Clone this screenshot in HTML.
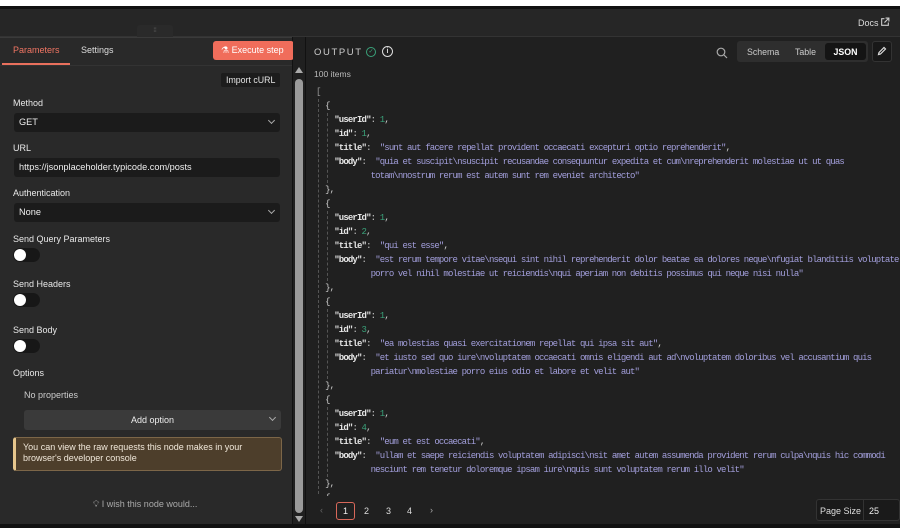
<!DOCTYPE html>
<html><head><style>
*{box-sizing:border-box;margin:0;padding:0}
body{width:900px;height:528px;background:#fff;position:relative;overflow:hidden;font-family:"Liberation Sans",sans-serif;color:#ddd;font-size:9px}
.abs{position:absolute}
#frame{left:0;top:6px;width:900px;height:522px;background:#111}
#hdr{left:0;top:9px;width:900px;height:28px;background:#262626;border-bottom:1px solid #333}
#left{left:0;top:37px;width:292px;height:487px;background:#292929;border-top:1px solid #3a3a3a}
#sb{left:293px;top:37px;width:12px;height:487px;background:#202020}
#right{left:306px;top:37px;width:594px;height:487px;background:#202020}
.lbl{position:absolute;left:13px;font-size:9px;color:#e8e8e8}
.inp{position:absolute;left:14px;width:266px;height:19px;background:#1b1b1b;border-radius:3px;font-size:9.2px;color:#eee;padding:4px 0 0 5px}
.chev{position:absolute;right:6px;top:5px;width:5px;height:5px;border-right:1px solid #aaa;border-bottom:1px solid #aaa;transform:rotate(45deg)}
.tog{position:absolute;left:13px;width:27px;height:14px;background:#171717;border-radius:7px}
.tog:after{content:"";position:absolute;left:1px;top:1px;width:12px;height:12px;border-radius:6px;background:#fff}
#json{position:absolute;left:316px;top:85px;font-family:"Liberation Mono",monospace;font-size:9px;letter-spacing:-0.85px;line-height:14px;white-space:pre;color:#ccc}
.k{color:#e6e6e6;font-weight:bold}
.n{color:#3aa27a}
.s{color:#a39fdc}
.g{position:absolute;width:0;border-left:1px dashed #555}
</style></head><body>
<div id="frame" class="abs"></div>
<div id="hdr" class="abs"><span class="abs" style="left:858px;top:9px;font-size:9px;color:#ddd">Docs</span>
<svg class="abs" style="left:880px;top:8px" width="10" height="10" viewBox="0 0 9 9" fill="none" stroke="#ccc" stroke-width="1"><path d="M4 1.5H1.5V7.5H7.5V5M5 1H8V4M8 1L4 5"/></svg></div>
<div class="abs" style="left:137px;top:25px;width:36px;height:12px;background:#2a2a2a;border-radius:3px 3px 0 0;font-size:6px;color:#666;text-align:center;line-height:12px">⁞⁞</div>
<div id="left" class="abs">
 <div class="abs" style="left:13px;top:7px;font-size:9px;color:#f07563">Parameters</div>
 <div class="abs" style="left:2px;top:25px;width:68px;height:2px;background:#e9705d"></div>
 <div class="abs" style="left:81px;top:7px;font-size:9px;color:#ddd">Settings</div>
 <div class="abs" style="left:0;top:27px;width:292px;height:1px;background:#333"></div>
 <div class="abs" style="left:213px;top:3px;width:81px;height:19px;background:#f06d5b;border-radius:3px;color:#fff;font-size:9px;padding:4px 0 0 8px">⚗ Execute step</div>
 <div class="abs" style="left:221px;top:35px;width:59px;height:14px;background:#1c1c1c;border-radius:2px;font-size:8.8px;color:#e4e4e4;padding:2px 0 0 5px">Import cURL</div>
 <div class="lbl" style="top:60px">Method</div>
 <div class="inp" style="top:75px">GET<div class="chev"></div></div>
 <div class="lbl" style="top:105px">URL</div>
 <div class="inp" style="top:120px">https://jsonplaceholder.typicode.com/posts</div>
 <div class="lbl" style="top:150px">Authentication</div>
 <div class="inp" style="top:165px">None<div class="chev"></div></div>
 <div class="lbl" style="top:196px">Send Query Parameters</div>
 <div class="tog" style="top:210px"></div>
 <div class="lbl" style="top:241px">Send Headers</div>
 <div class="tog" style="top:255px"></div>
 <div class="lbl" style="top:287px">Send Body</div>
 <div class="tog" style="top:301px"></div>
 <div class="lbl" style="top:330px">Options</div>
 <div class="abs" style="left:24px;top:352px;font-size:9px;color:#ccc">No properties</div>
 <div class="abs" style="left:24px;top:372px;width:257px;height:20px;background:#3a3a3a;border-radius:3px;font-size:9px;color:#eee;text-align:center;padding-top:5px">Add option<div class="chev" style="top:5px"></div></div>
 <div class="abs" style="left:13px;top:399px;width:269px;height:34px;background:#4d3e2b;border:1px solid #7c6648;border-left:3px solid #e6c68c;border-radius:3px;font-size:9px;color:#f1e8da;padding:4px 0 0 7px;line-height:11px">You can view the raw requests this node makes in your<br>browser's developer console</div>
 <div class="abs" style="left:93px;top:461px;font-size:9px;color:#aaa">💡︎ I wish this node would...</div>
</div>
<div id="sb" class="abs">
 <div class="abs" style="left:2px;top:30px;width:0;height:0;border-left:4px solid transparent;border-right:4px solid transparent;border-bottom:6px solid #aaa"></div>
 <div class="abs" style="left:2px;top:42px;width:8px;height:434px;background:#9a9a9a;border-radius:4px"></div>
 <div class="abs" style="left:2px;top:479px;width:0;height:0;border-left:4px solid transparent;border-right:4px solid transparent;border-top:6px solid #aaa"></div>
</div>
<div id="right" class="abs">
 <div class="abs" style="left:8px;top:10px;font-size:9.5px;letter-spacing:1.6px;color:#ccc">OUTPUT</div>
 <div class="abs" style="left:60px;top:10px;width:10px;height:10px;border:1.3px solid #3aa27a;border-radius:5px;font-size:6px;color:#3aa27a;text-align:center;line-height:8px">✓</div>
 <div class="abs" style="left:76px;top:9px;width:11px;height:11px;border:1.3px solid #ddd;border-radius:6px;font-size:7px;color:#ddd;text-align:center;line-height:9px;font-weight:bold">i</div>
 <div class="abs" style="left:8px;top:32px;font-size:8.5px;color:#bbb">100 items</div>
 <svg class="abs" style="left:410px;top:10px" width="12" height="12" viewBox="0 0 12 12" fill="none" stroke="#aaa" stroke-width="1.2"><circle cx="5" cy="5" r="3.8"/><path d="M8 8L11 11"/></svg>
 <div class="abs" style="left:431px;top:4px;width:131px;height:21px;background:#2e2e2e;border-radius:3px"></div>
 <div class="abs" style="left:441px;top:10px;font-size:8.8px;color:#ccc">Schema</div>
 <div class="abs" style="left:489px;top:10px;font-size:8.8px;color:#ccc">Table</div>
 <div class="abs" style="left:519px;top:6px;width:41px;height:17px;background:#141414;border-radius:3px;font-size:8.8px;color:#fff;font-weight:bold;text-align:center;padding-top:4px">JSON</div>
 <div class="abs" style="left:566px;top:4px;width:20px;height:21px;background:#181818;border:1px solid #333;border-radius:3px"></div>
 <svg class="abs" style="left:571px;top:9px" width="10" height="10" viewBox="0 0 10 10" fill="none" stroke="#ddd" stroke-width="1.2"><path d="M1.5 8.5L2 6.5L7 1.5L8.5 3L3.5 8Z"/></svg>
</div>
<div class="g" style="left:318px;top:99px;height:400px"></div>
<div class="g" style="left:327px;top:113px;height:70px"></div>
<div class="g" style="left:327px;top:211px;height:70px"></div>
<div class="g" style="left:327px;top:309px;height:70px"></div>
<div class="g" style="left:327px;top:407px;height:70px"></div>
<div id="json"><span style="color:#999">[</span>
  {
    <span class="k">"userId"</span>: <span class="n">1</span>,
    <span class="k">"id"</span>: <span class="n">1</span>,
    <span class="k">"title"</span>:  <span class="s">"sunt aut facere repellat provident occaecati excepturi optio reprehenderit"</span>,
    <span class="k">"body"</span>:  <span class="s">"quia et suscipit\nsuscipit recusandae consequuntur expedita et cum\nreprehenderit molestiae ut ut quas</span>
<span class="s">            totam\nnostrum rerum est autem sunt rem eveniet architecto"</span>
  },
  {
    <span class="k">"userId"</span>: <span class="n">1</span>,
    <span class="k">"id"</span>: <span class="n">2</span>,
    <span class="k">"title"</span>:  <span class="s">"qui est esse"</span>,
    <span class="k">"body"</span>:  <span class="s">"est rerum tempore vitae\nsequi sint nihil reprehenderit dolor beatae ea dolores neque\nfugiat blanditiis voluptate</span>
<span class="s">            porro vel nihil molestiae ut reiciendis\nqui aperiam non debitis possimus qui neque nisi nulla"</span>
  },
  {
    <span class="k">"userId"</span>: <span class="n">1</span>,
    <span class="k">"id"</span>: <span class="n">3</span>,
    <span class="k">"title"</span>:  <span class="s">"ea molestias quasi exercitationem repellat qui ipsa sit aut"</span>,
    <span class="k">"body"</span>:  <span class="s">"et iusto sed quo iure\nvoluptatem occaecati omnis eligendi aut ad\nvoluptatem doloribus vel accusantium quis</span>
<span class="s">            pariatur\nmolestiae porro eius odio et labore et velit aut"</span>
  },
  {
    <span class="k">"userId"</span>: <span class="n">1</span>,
    <span class="k">"id"</span>: <span class="n">4</span>,
    <span class="k">"title"</span>:  <span class="s">"eum et est occaecati"</span>,
    <span class="k">"body"</span>:  <span class="s">"ullam et saepe reiciendis voluptatem adipisci\nsit amet autem assumenda provident rerum culpa\nquis hic commodi</span>
<span class="s">            nesciunt rem tenetur doloremque ipsam iure\nquis sunt voluptatem rerum illo velit"</span>
  },
  {</div>
<div class="abs" style="left:306px;top:496px;width:594px;height:28px;background:#202020">
 <div class="abs" style="left:14px;top:9px;font-size:9px;color:#666">‹</div>
 <div class="abs" style="left:30px;top:6px;width:19px;height:18px;border:1px solid #d9685a;border-radius:3px;font-size:9px;color:#eee;text-align:center;padding-top:3px">1</div>
 <div class="abs" style="left:58px;top:10px;font-size:9px;color:#ddd">2</div>
 <div class="abs" style="left:80px;top:10px;font-size:9px;color:#ddd">3</div>
 <div class="abs" style="left:101px;top:10px;font-size:9px;color:#ddd">4</div>
 <div class="abs" style="left:124px;top:9px;font-size:9px;color:#aaa">›</div>
 <div class="abs" style="left:510px;top:3px;width:84px;height:22px;background:#1a1a1a;border:1px solid #333;border-radius:3px"></div>
 <div class="abs" style="left:514px;top:10px;font-size:9px;color:#ddd">Page Size</div>
 <div class="abs" style="left:557px;top:4px;width:1px;height:20px;background:#333"></div>
 <div class="abs" style="left:563px;top:10px;font-size:9px;color:#eee">25</div>
</div>
</body></html>
